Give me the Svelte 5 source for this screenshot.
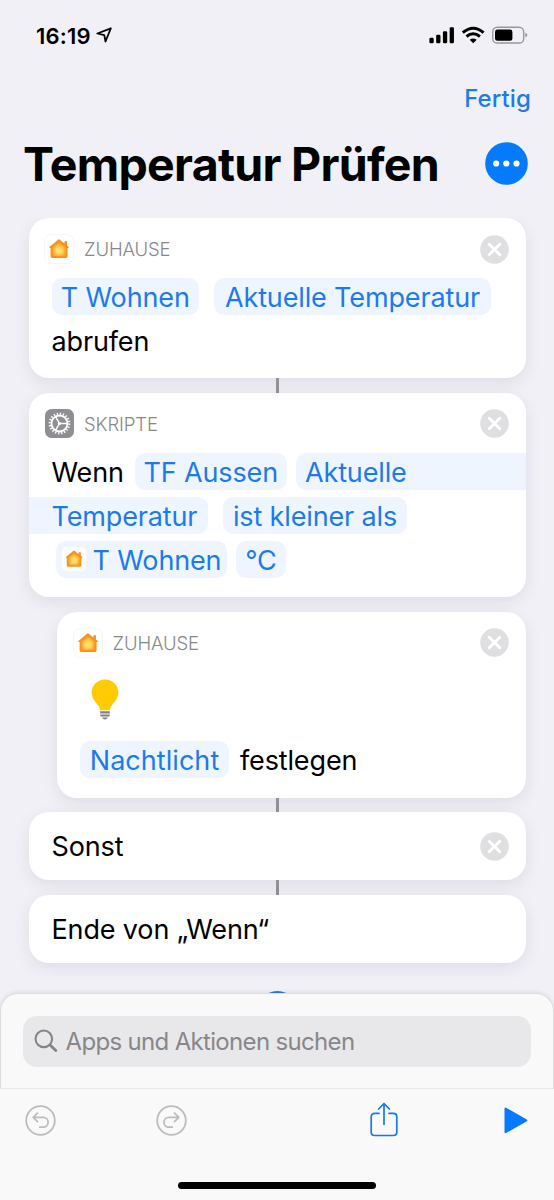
<script>
  const signal = [5.5, 8.5, 12, 16];
</script>

{#snippet house(size)}
  <svg class="house" width={size} height={size} viewBox="0 0 28 28">
    <defs>
      <radialGradient id="glow" cx=".5" cy=".6" r=".6">
        <stop offset="0" stop-color="#ffe27a" />
        <stop offset=".45" stop-color="#ffcb52" />
        <stop offset="1" stop-color="#fb9a1c" />
      </radialGradient>
    </defs>
    <path d="M4.3 12 13.4 4.5Q14 4 14.6 4.5L19.4 8.4V6.2H22V10.6L23.9 12Q24.4 12.9 22.6 12.9V21.6Q22.6 23 21.2 23H7Q5.6 23 5.6 21.6V12.9Q3.8 12.9 4.3 12Z" fill="#f7941f" />
    <path d="M14 7.2 20.6 12.5V20.1Q20.6 21 19.7 21H8.5Q7.6 21 7.6 20.1V12.5Z" fill="url(#glow)" />
    <path d="M14 11.2 17.6 14.2V18.4H10.4V14.2Z" fill="#ffdf6e" opacity=".7" />
  </svg>
{/snippet}

{#snippet close()}
  <button class="close" aria-label="Entfernen">
    <svg width="29" height="29" viewBox="0 0 29 29">
      <circle cx="14.5" cy="14.5" r="14.3" fill="#dfdfe1" />
      <path d="M9.2 9.2 19.8 19.8M19.8 9.2 9.2 19.8" stroke="#fff" stroke-width="2.8" stroke-linecap="round" />
    </svg>
  </button>
{/snippet}

<div class="screen">
  <div class="status">
    <span class="time">16:19</span>
    <svg class="loc" width="17" height="17" viewBox="0 0 17 17"><path d="M1.3 6.5 14.8 1.3 9.5 14.5 8.3 8.2Z" fill="none" stroke="#000" stroke-width="1.8" stroke-linejoin="round" /></svg>
    <div class="grow"></div>
    <svg width="100" height="20" viewBox="0 0 100 20">
      {#each signal as h, i}
        <rect x={0.4 + i * 6.75} y={17.3 - h} width="4.3" height={h} rx="1.2" />
      {/each}
      <g fill="none" stroke="#000" stroke-width="3">
        <path d="M33.8 6.7Q44.2-2.1 54.6 6.7" />
        <path d="M37.5 10.5Q44.2 5.1 50.9 10.5" />
      </g>
      <path d="M40.7 13.8Q44.2 11 47.7 13.8L44.2 17.3Z" />
      <rect x="63.7" y="1.2" width="31" height="15.8" rx="4.6" fill="none" stroke="#98989c" stroke-width="1.4" />
      <rect x="66" y="3.5" width="17.4" height="11.3" rx="2.4" />
      <path d="M96.3 6.7Q98.4 7.6 98.4 9.1T96.3 11.5Z" fill="#98989c" />
    </svg>
  </div>

  <div class="nav"><span class="done">Fertig</span></div>

  <div class="title">
    <h1>Temperatur Prüfen</h1>
    <svg width="43" height="43" viewBox="0 0 43 43"><circle cx="21.5" cy="21.5" r="21.3" fill="#047aff" /><g fill="#fff"><circle cx="11.2" cy="21.5" r="3.1" /><circle cx="21.3" cy="21.5" r="3.1" /><circle cx="31.5" cy="21.5" r="3.1" /></g></svg>
  </div>

  <main>
    <section class="card first">
      <header><span class="tile">{@render house(28)}</span><span class="app">ZUHAUSE</span>{@render close()}</header>
      <div class="line">
        <span class="chip" style="width:147.5px"><span class="tw">T Wohnen</span></span>
        <span class="chip wide" style="width:277px"><span class="at">Aktuelle Temperatur</span></span>
      </div>
      <div class="line"><span class="ab">abrufen</span></div>
    </section>
    <i class="link"></i>
    <section class="card second">
      <header>
        <svg class="gear" width="29" height="29" viewBox="0 0 29 29">
          <rect width="29" height="29" rx="6.5" fill="#8e8e93" />
          <g fill="none" stroke="#fff">
            <circle cx="14.5" cy="14.5" r="8" stroke-width="1.8" />
            <circle cx="14.5" cy="14.5" r="9.8" stroke-width="2.2" stroke-dasharray="1.35 1.7288" />
            <path d="M14.5 14.5H22.5M14.5 14.5 10.5 7.6M14.5 14.5 10.5 21.4" stroke-width="1.4" />
          </g>
          <circle cx="14.5" cy="14.5" r="1.6" fill="#fff" />
        </svg>
        <span class="app sk">SKRIPTE</span>{@render close()}
      </header>
      <div class="line">
        <span class="we">Wenn</span>
        <span class="chip tf" style="width:151.5px"><span class="ta">TF Aussen</span></span>
        <span class="chip toedge"><span class="ak">Aktuelle</span></span>
      </div>
      <div class="line flush">
        <span class="chip fromedge"><span class="te">Temperatur</span></span>
        <span class="chip wide" style="width:184px"><span class="ik">ist kleiner als</span></span>
      </div>
      <div class="line third">
        <span class="chip var" style="width:171.5px"><span class="mini">{@render house(24)}</span><span class="tw">T Wohnen</span></span>
        <span class="chip unit" style="width:50px"><span>°C</span></span>
      </div>
    </section>
    <div class="space"></div>
    <section class="card nested">
      <header><span class="tile">{@render house(28)}</span><span class="app">ZUHAUSE</span>{@render close()}</header>
      <svg class="bulb" width="28" height="42" viewBox="0 0 28 42">
        <path d="M14 .5C6.4.5.6 6.2.6 13.6C.6 22.4 8.6 25 9.2 31.2H18.8C19.4 25 27.4 22.4 27.4 13.6C27.4 6.2 21.6.5 14 .5Z" fill="#ffcb05" />
        <path d="M9.2 32.2H18.8V34.4H9.2ZM9.2 35.4H18.8Q18.8 37.6 17.5 37.6H10.5Q9.2 37.6 9.2 35.4ZM10.9 38.5H17.1L15.6 40.1Q14 41 12.4 40.1Z" fill="#808085" />
      </svg>
      <div class="line">
        <span class="chip" style="width:149px"><span class="na">Nachtlicht</span></span>
        <span class="fe">festlegen</span>
      </div>
    </section>
    <i class="link"></i>
    <section class="card short"><span class="so">Sonst</span>{@render close()}</section>
    <i class="link"></i>
    <section class="card short"><span class="en">Ende von „Wenn“</span></section>
    <div class="add"></div>
  </main>

  <div class="sheet">
    <div class="search">
      <svg width="24" height="24" viewBox="0 0 24 24"><g fill="none" stroke="#838388" stroke-linecap="round"><circle cx="9.8" cy="9.8" r="8.3" stroke-width="2.1" /><path d="M16 16 21.8 21.6" stroke-width="2.8" /></g></svg>
      <span class="se">Apps und Aktionen suchen</span>
    </div>
  </div>
  <footer>
    <svg width="31" height="31" viewBox="0 0 31 31"><g fill="none" stroke="#bcbcbf" stroke-width="1.8" stroke-linecap="round" stroke-linejoin="round"><circle cx="15.5" cy="15.5" r="14.3" /><path d="M12.5 8.2 8.2 12.4 12.5 16.6M8.6 12.4H18.2A4.9 4.9 0 0 1 18.2 22.2H14.8" /></g></svg>
    <svg class="redo" width="31" height="31" viewBox="0 0 31 31"><g fill="none" stroke="#bcbcbf" stroke-width="1.8" stroke-linecap="round" stroke-linejoin="round"><circle cx="15.5" cy="15.5" r="14.3" /><path d="M18.5 8.2 22.8 12.4 18.5 16.6M22.4 12.4H12.8A4.9 4.9 0 0 0 12.8 22.2H16.2" /></g></svg>
    <svg class="share" width="28" height="35" viewBox="0 0 28 35"><g fill="none" stroke="#1479f2" stroke-width="1.7" stroke-linecap="round" stroke-linejoin="round"><path d="M9 11.4H4.7Q1.2 11.4 1.2 14.9V30Q1.2 33.5 4.7 33.5H23.3Q26.8 33.5 26.8 30V14.9Q26.8 11.4 23.3 11.4H19M14 22.3V1.5M8.6 7 14 1.5 19.4 7" /></g></svg>
    <svg class="play" width="24" height="27" viewBox="0 0 24 27"><path d="M1.5 1.5V25.2L22.3 13.4Z" fill="#067aff" stroke="#067aff" stroke-width="2" stroke-linejoin="round" /></svg>
    <div class="home"></div>
  </footer>
</div>

<style>
  :global(body) { background: #f1f0f6; overflow: hidden; }
  .screen {
    width: 554px; height: 1200px; overflow: hidden; box-sizing: border-box;
    display: flex; flex-direction: column; background: #f1f0f6;
    font-family: Inter, "Open Sans", sans-serif; color: #000;
  }
  svg { display: block; flex: none; }
  .status { display: flex; height: 72px; padding: 26px 25px 0 36px; box-sizing: border-box; align-items: flex-start; }
  .time { font-size: 22px; line-height: 20px; font-weight: 560; letter-spacing: .2px; }
  .loc { margin: 1px 0 0 5px; }
  .grow { flex: 1; }
  .nav { height: 54px; display: flex; justify-content: flex-end; padding-right: 23px; line-height: 54px; color: #1d7bea; }
  .done { font-size: 24px; font-weight: 500; letter-spacing: .1px; }
  .title { height: 92px; flex: none; display: flex; justify-content: space-between; padding: 0 26.5px 0 23px; }
  .title svg { margin-top: 16px; }
  h1 { margin: 0; font-size: 46.5px; line-height: 77px; font-weight: 700; letter-spacing: -.7px; white-space: nowrap; }
  main { height: 775px; flex: none; overflow: hidden; display: flex; flex-direction: column; }
  .card {
    margin: 0 28.5px; background: #fff; border-radius: 20px; flex: none; box-sizing: border-box;
    box-shadow: 0 5px 16px rgba(40, 35, 70, .085); padding: 16px 17px 0 16.5px; font-size: 27px; font-weight: 430; letter-spacing: -.14px; position: relative;
  }
  .first { height: 160px; }
  .second { height: 204.5px; }
  .nested { height: 186px; margin-left: 57px; }
  .short { height: 68px; padding: 0 17px 0 23px; display: flex; align-items: center; justify-content: space-between; }
  .short span { padding-top: 1px; }
  .link { flex: none; width: 3px; height: 14.5px; background: #919197; margin-left: 275.5px; position: relative; }
  .space { height: 14.5px; flex: none; }
  header { height: 30px; display: flex; align-items: center; margin-bottom: 14px; }
  .app { font-size: 18.5px; color: #88888c; margin-left: 11px; flex: 1; font-weight: 350; letter-spacing: -.1px; }
  .sk { margin-left: 10px; }
  .tile { width: 28px; height: 28px; border-radius: 6px; box-shadow: 0 0 0 1px #f7f7f7; }
  .close { border: 0; padding: 0; margin: 0; background: none; }
  .line { display: flex; height: 37px; line-height: 39px; margin: 0 6.5px 7px; white-space: nowrap; }
  .chip { background: #eff5ff; color: #1b7af0; border-radius: 10px; display: flex; justify-content: center; flex: none; }
  .wide { margin-left: 15px; }
  .tf { margin-left: 11px; }
  .we { width: 72.5px; }
  .toedge { margin: 0 -23.5px 0 9px; flex: 1; border-radius: 10px 0 0 10px; justify-content: flex-start; padding-left: 9.5px; }
  .flush { margin-left: -16.5px; }
  .fromedge { width: 179.5px; border-radius: 0 10px 10px 0; box-sizing: border-box; justify-content: flex-start; padding-left: 23px; }
  .third { margin-left: 10.5px; }
  .var { justify-content: flex-start; box-sizing: border-box; padding-left: 6.5px; }
  .mini { width: 24px; height: 24px; background: #fff; border-radius: 5px; margin: 6px 6.5px 0 0; }
  .unit { margin-left: 9px; }
  .bulb { margin: 21px 0 20px 17.5px; }
  .nested header { margin-bottom: 0; }
  .nested .line { margin-top: 20.5px; }
  .na { letter-spacing: .05px; }
  .fe { margin-left: 11px; }
  .add { width: 43px; height: 43px; border-radius: 50%; background: #3478c9; margin: 28.5px 0 0 255.5px; flex: none; }
  .sheet {
    height: 96px; flex: none; box-sizing: border-box; background: #f9f9f9; border: 1px solid #dedee1; border-bottom-color: #e8e8e9;
    border-radius: 18px 18px 0 0; padding: 22px 22px 0; box-shadow: 0 -1px 4px rgba(0, 0, 0, .08);
  }
  .search { height: 51px; background: #e8e8ea; border-radius: 14px; display: flex; align-items: center; padding-left: 11px; color: #87878b; font-size: 24px; }
  .search svg { margin-top: -1px; }
  .search span { margin-left: 7.5px; letter-spacing: -.67px; white-space: nowrap; }
  footer { flex: 1; background: #f9f9f9; display: grid; grid-template-columns: 131px 214.5px 132.5px 1fr; padding: 16px 0 0 24.5px; align-content: start; position: relative; }
  .share { margin-top: -3px; }
  .play { margin: 2px 0 0 1px; }
  .home { position: absolute; left: 178px; bottom: 11px; width: 198px; height: 7.5px; border-radius: 4px; background: #000; }
</style>
